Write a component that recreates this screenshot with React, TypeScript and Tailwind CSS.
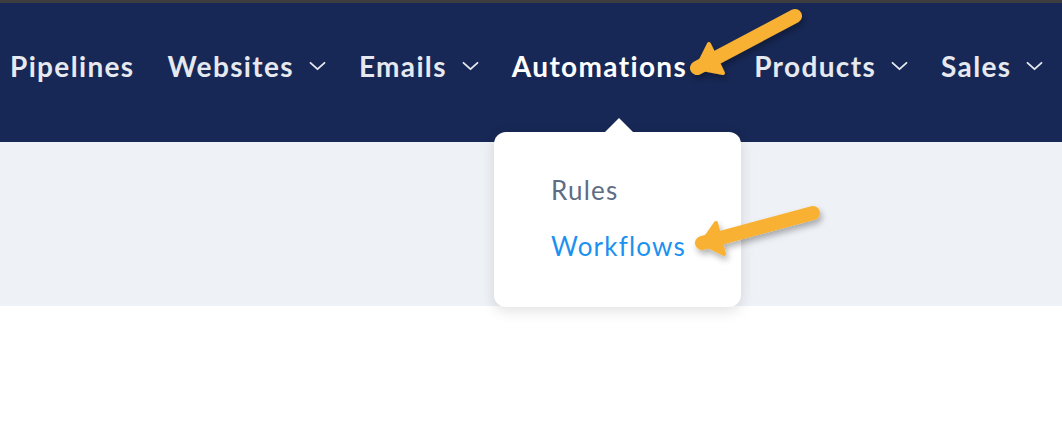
const items = [
  { label: 'Pipelines', menu: false },
  { label: 'Websites', menu: true },
  { label: 'Emails', menu: true },
  { label: 'Automations', menu: false, active: true },
  { label: 'Products', menu: true },
  { label: 'Sales', menu: true },
];

function Chevron() {
  return (
    <svg className="ml-[15px]" width="17" height="10" viewBox="0 0 17 10" fill="none">
      <path d="M1.5 1.8 L8.5 8.2 L15.5 1.8" stroke="#e6e9ef" strokeWidth="1.8" strokeLinecap="round" strokeLinejoin="round" />
    </svg>
  );
}

function Arrow({ tail, tip, left, right }: { tail: string; tip: string; left: string; right: string }) {
  return (
    <g filter="url(#arrowShadow)">
      <path d={`M${tail} L${tip}`} stroke="#f8b133" strokeWidth="14" strokeLinecap="round" fill="none" />
      <path d={`M${tip} L${left} L${right} Z`} fill="#f8b133" stroke="#f8b133" strokeWidth="4" strokeLinejoin="round" />
    </g>
  );
}

export default function App() {
  return (
    <div className="relative w-[1062px] h-[424px] overflow-hidden bg-white font-['Lato',sans-serif]">
      <div className="h-[3px] bg-[#3d3d3f]" />
      <nav className="h-[139px] bg-[#172856] flex items-start pt-[41px] pl-[10px]">
        {items.map((item) => (
          <div key={item.label} className="flex items-center mr-[33px]">
            <span
              className={`text-[28px] font-bold tracking-[1.35px] leading-[44px] ${
                item.active ? 'text-white' : 'text-[#e6e9ef]'
              }`}
            >
              {item.label}
            </span>
            {item.menu && <Chevron />}
            {item.active && <span className="w-[34px]" />}
          </div>
        ))}
      </nav>
      <div className="h-[164px] bg-[#eef1f6]" />

      {/* dropdown */}
      <div className="absolute left-[494px] top-[132px] w-[247px] h-[175px] bg-white rounded-[12px] shadow-[0_4px_14px_rgba(0,0,0,0.12)] pl-[57px] pt-[43px]">
        <div className="absolute left-[110px] top-[-14px] w-0 h-0 border-l-[15px] border-r-[15px] border-b-[15px] border-l-transparent border-r-transparent border-b-white" />
        <div className="text-[26px] leading-[30px] tracking-[1.2px] text-[#5f6d84]">Rules</div>
        <div className="mt-[26px] text-[26px] leading-[30px] tracking-[1.2px] text-[#1d91f0]">Workflows</div>
      </div>

      {/* annotation arrows */}
      <svg className="absolute left-0 top-0 pointer-events-none" width="1062" height="424">
        <defs>
          <filter id="arrowShadow" x="-20%" y="-20%" width="140%" height="160%">
            <feDropShadow dx="2" dy="4" stdDeviation="3" floodColor="#000" floodOpacity="0.3" />
          </filter>
        </defs>
        <Arrow tail="795 16" tip="697 68" left="709 44" right="723 73" />
        <Arrow tail="813 213" tip="702 243" left="716 223" right="724 254" />
      </svg>
    </div>
  );
}
